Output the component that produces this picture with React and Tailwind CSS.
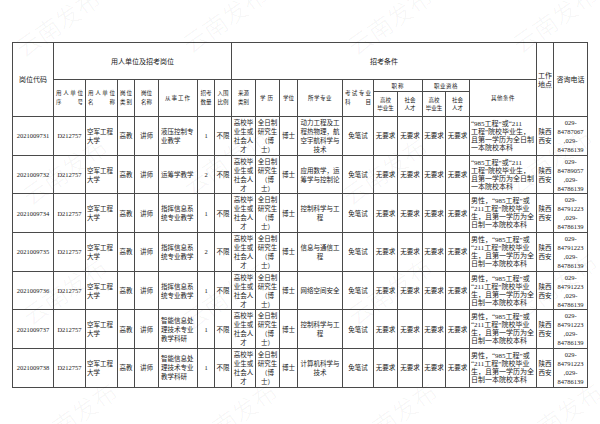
import React from "react";

const widths = [
  "w-[41px]", "w-[32px]", "w-[32px]", "w-[17px]", "w-[24px]", "w-[39px]", "w-[17px]",
  "w-[17px]", "w-[24px]", "w-[24px]", "w-[18px]", "w-[45px]", "w-[31px]", "w-[24px]",
  "w-[25px]", "w-[23px]", "w-[24px]", "w-[67px]", "w-[17px]", "w-[34px]",
];

const other985 = ["“985工程”或“211", "工程”院校毕业生，", "且第一学历为全日制", "一本院校本科"];
const otherMale = ["男性，“985工程”或", "“211工程”院校毕业", "生，且第一学历为全", "日制一本院校本科"];
const xinxi = ["指挥信息系", "统专业教学"];
const zhineng = ["智能信息处", "理技术专业", "教学科研"];

const rows = [
  { code: "2021009731", work: ["液压控制专", "业教学"], n: 1, major: ["动力工程及工", "程热物理，航", "空宇航科学与", "技术"], other: other985, tel: "84787067" },
  { code: "2021009732", work: ["运筹学教学"], n: 2, major: ["应用数学，运", "筹学与控制论"], other: other985, tel: "84789057" },
  { code: "2021009734", work: xinxi, n: 1, major: ["控制科学与工", "程"], other: otherMale, tel: "84791223" },
  { code: "2021009735", work: xinxi, n: 2, major: ["信息与通信工", "程"], other: otherMale, tel: "84791223" },
  { code: "2021009736", work: xinxi, n: 1, major: ["网络空间安全"], other: otherMale, tel: "84791223" },
  { code: "2021009737", work: zhineng, n: 1, major: ["控制科学与工", "程"], other: otherMale, tel: "84791223" },
  { code: "2021009738", work: zhineng, n: 1, major: ["计算机科学与", "技术"], other: otherMale, tel: "84791223" },
];

// one fixed-height div per line, so mixed fonts can't grow the row
const Lines = ({ items, h = "h-[9px]" }) => (
  <>
    {items.map((t, i) => (
      <div key={i} className={h}>{t}</div>
    ))}
  </>
);

const td = "border border-[#4a4a4a] p-0 align-middle overflow-hidden";
const th = "border border-[#4a4a4a] p-0 align-middle font-normal overflow-hidden";
const bold = " font-bold font-['Noto_Sans_CJK_SC',sans-serif] text-[7px]";

// small header label, justified like the pdf
const Jl = ({ a, b }) => (
  <div className="px-[2px] text-justify [text-align-last:justify] text-[5.5px] leading-[9px]">
    <div className="h-[9px]">{a}</div>
    <div className="h-[9px]">{b}</div>
  </div>
);

const marks = [
  [18, 2], [185, -2], [350, 0], [515, -2],
  [25, 150], [185, 140], [345, 150], [510, 140],
  [25, 270], [185, 275], [350, 270], [515, 265],
  [35, 395], [195, 395], [355, 395], [520, 395],
];

export default function App() {
  return (
    <div className="relative w-[600px] h-[424px] bg-white overflow-hidden font-['Liberation_Serif','Noto_Sans_CJK_SC',serif] text-[#1a1a1a]">
      <div className="pt-[42px] pl-[12px]">
        <table className="table-fixed border-collapse w-[575px] text-[6.5px] leading-[9px] whitespace-nowrap">
          <colgroup>
            {widths.map((w, i) => (
              <col key={i} className={w} />
            ))}
          </colgroup>
          <thead>
            <tr className="h-[37px]">
              <th rowSpan={3} className={th + bold}>岗位代码</th>
              <th colSpan={7} className={th + bold}>用人单位及招考岗位</th>
              <th colSpan={10} className={th + bold}>招考条件</th>
              <th rowSpan={3} className={th + bold}>
                <Lines items={["工作", "地点"]} />
              </th>
              <th rowSpan={3} className={th + bold}>咨询电话</th>
            </tr>
            <tr className="h-[12px] text-[5.5px]">
              <th rowSpan={2} className={th}><Jl a="用人单位" b="序　　号" /></th>
              <th rowSpan={2} className={th}><Jl a="用人单位" b="名　　称" /></th>
              <th rowSpan={2} className={th}><Jl a="岗位" b="类别" /></th>
              <th rowSpan={2} className={th}><Lines items={["岗位", "名称"]} /></th>
              <th rowSpan={2} className={th + " tracking-[1px]"}>从事工作</th>
              <th rowSpan={2} className={th}><Lines items={["招考", "数量"]} /></th>
              <th rowSpan={2} className={th}><Lines items={["入围", "比例"]} /></th>
              <th rowSpan={2} className={th}><Lines items={["来源", "类别"]} /></th>
              <th rowSpan={2} className={th + " tracking-[2px]"}>学历</th>
              <th rowSpan={2} className={th}>学位</th>
              <th rowSpan={2} className={th + " tracking-[0.5px]"}>所学专业</th>
              <th rowSpan={2} className={th}><Jl a="考试专业" b="科　　目" /></th>
              <th colSpan={2} className={th + " tracking-[1px] leading-[10px]"}>职称</th>
              <th colSpan={2} className={th + " tracking-[0.5px] leading-[10px]"}>职业资格</th>
              <th rowSpan={2} className={th + " tracking-[0.5px]"}>其他条件</th>
            </tr>
            <tr className="h-[25px] text-[5.5px] leading-[8px]">
              <th className={th}><Lines h="h-[8px]" items={["高校", "毕业生"]} /></th>
              <th className={th}><Lines h="h-[8px]" items={["社会", "人才"]} /></th>
              <th className={th}><Lines h="h-[8px]" items={["高校", "毕业生"]} /></th>
              <th className={th}><Lines h="h-[8px]" items={["社会", "人才"]} /></th>
            </tr>
          </thead>
          <tbody>
            {rows.map((r) => (
              <tr key={r.code} className="h-[38.7px]">
                <td className={td + " text-center"}>{r.code}</td>
                <td className={td + " text-center"}>D212757</td>
                <td className={td + " px-[1px] text-left"}>
                  <Lines items={["空军工程", "大学"]} />
                </td>
                <td className={td + " text-center"}>高教</td>
                <td className={td + " text-center"}>讲师</td>
                <td className={td + " px-[2px] text-left"}><Lines items={r.work} /></td>
                <td className={td + " text-center"}>{r.n}</td>
                <td className={td + " text-center"}>不限</td>
                <td className={td + " text-center"}>
                  <Lines items={["高校毕", "业生或", "社会人", "才"]} />
                </td>
                <td className={td + " text-center"}>
                  <Lines items={["全日制", "研究生", "（博", "士）"]} />
                </td>
                <td className={td + " text-center"}>博士</td>
                <td className={td + " text-center"}><Lines items={r.major} /></td>
                <td className={td + " text-center"}>免笔试</td>
                <td className={td + " text-center"}>无要求</td>
                <td className={td + " text-center"}>无要求</td>
                <td className={td + " text-center"}>无要求</td>
                <td className={td + " text-center"}>无要求</td>
                <td className={td + " px-[1px] text-left text-[7px] leading-[8px]"}>
                  <Lines h="h-[8px]" items={r.other} />
                </td>
                <td className={td + " text-center"}>
                  <Lines items={["陕西", "西安"]} />
                </td>
                <td className={td + " text-center"}>
                  <Lines items={["029-", r.tel, ",029-", "84786139"]} />
                </td>
              </tr>
            ))}
          </tbody>
        </table>
      </div>

      {/* watermark */}
      <div className="pointer-events-none absolute inset-0">
        {marks.map(([x, y], i) => (
          <div
            key={i}
            className="absolute -rotate-[35deg] origin-left whitespace-nowrap font-['Noto_Sans_CJK_SC',sans-serif] text-[24px] font-light text-black/[0.05]"
            style={{ left: x, top: y + 30 }}
          >
            云南发布
          </div>
        ))}
      </div>
    </div>
  );
}
